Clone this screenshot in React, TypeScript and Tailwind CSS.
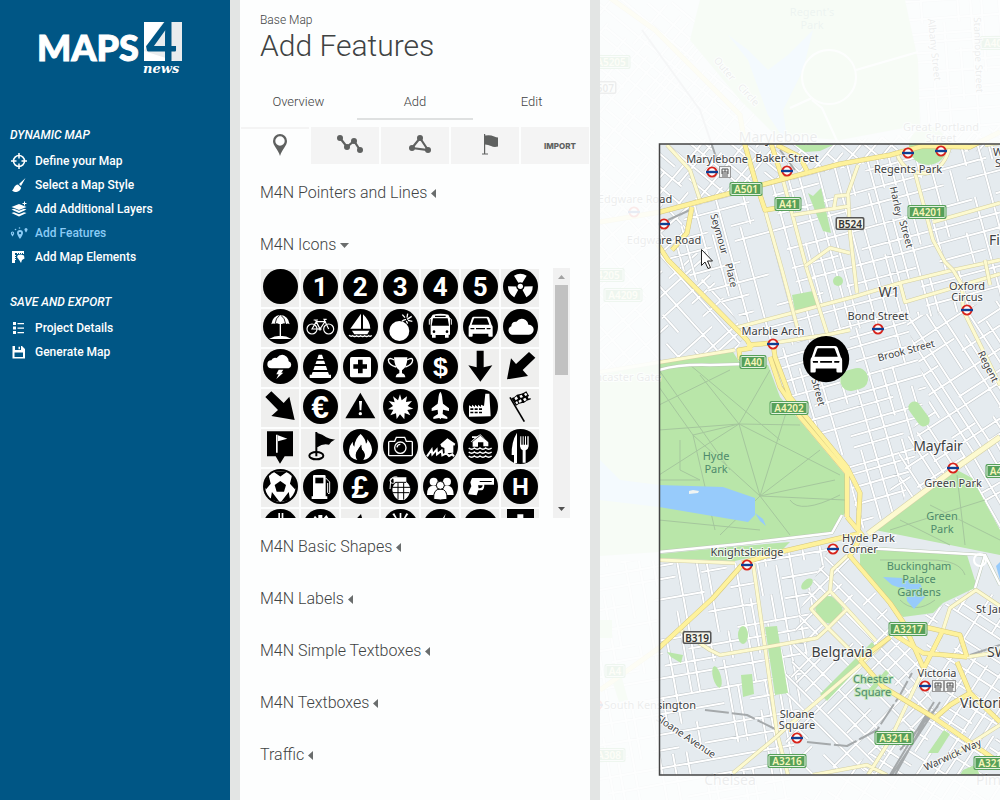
import { useState, type ReactNode } from "react";

type IconDef = { name: string; bare?: boolean; art?: ReactNode };
type Point = [number, number];

/* ---------- sidebar ---------- */

function Logo() {
  return (
    <svg width="146" height="54" viewBox="0 0 146 54" role="img" aria-label="Maps4News">
      <text
        x="0"
        y="39"
        fontSize="36"
        fontWeight="900"
        fill="#fff"
        stroke="#fff"
        strokeWidth="1"
        fontFamily="Lato, sans-serif"
      >
        MAPS
      </text>
      <rect x="107" y="0" width="38" height="39" fill="#fff" />
      <path d="M126 0h19v39h-7L107 29z" fill="#e9ecee" />
      <text x="109" y="39" fontSize="54" fontWeight="900" fill="#005685" fontFamily="Lato, sans-serif">
        4
      </text>
      <text
        x="106"
        y="51"
        fontSize="13"
        fontWeight="700"
        fontStyle="italic"
        fill="#fff"
        fontFamily="'DejaVu Serif', serif"
      >
        news
      </text>
    </svg>
  );
}

const navIcons: Record<string, ReactNode> = {
  define: (
    <g fill="none" stroke="currentColor" strokeWidth="1.5">
      <circle cx="9" cy="8" r="5.5" />
      <path d="M9 0v5.500M9 10.500V16M1 8h5.500M11.500 8H17" />
    </g>
  ),
  style: (
    <path
      fill="currentColor"
      d="M15.500 1l-6.500 6 2 2zM8 7.500l3 3c0 2.500-2.500 4.500-6 4.500-1 0-2-1-3-1.500C4 12.500 4 8 8 7.500z"
    />
  ),
  layers: (
    <g fill="currentColor">
      <path d="M1.500 6L9 3l7.500 3L9 9z" />
      <path d="M1.500 8.500L4 7.800l5 2 5-2 2.500.7L9 12z" />
      <path d="M1.500 12l2.500-.8 5 2 5-2 2.500.8L9 15.500z" />
      <path d="M14 .5h1V2h1.500v1H15v1.500h-1V3h-1.500V2H14z" />
    </g>
  ),
  features: (
    <g fill="currentColor">
      <path fillRule="evenodd" d="M10 5a3 3 0 0 1 3 3c0 2-3 6-3 6S7 10 7 8a3 3 0 0 1 3-3zm0 1.900a1.200 1.200 0 1 0 0 2.400 1.200 1.200 0 0 0 0-2.400z" />
      <path fillRule="evenodd" d="M2.500 6.500a1.700 1.700 0 0 1 1.700 1.700c0 1.100-1.700 3.300-1.700 3.300S.8 9.300.8 8.200a1.700 1.700 0 0 1 1.700-1.700zm0 1.100a.6.6 0 1 0 0 1.200.6.600 0 0 0 0-1.200z" />
      <path d="M16 3a1.500 1.500 0 0 1 1.500 1.500C17.500 5.500 16 7.500 16 7.500s-1.500-2-1.500-3A1.500 1.500 0 0 1 16 3z" />
      <circle cx="5.500" cy="4.500" r=".8" />
      <circle cx="9.500" cy="3" r=".8" />
    </g>
  ),
  elements: (
    <g fill="currentColor">
      <path d="M2 2h12v3h-1V4h-1v1h-1V4h-1v1H9V4H8v1H7V4H5v2h1v1H5v1h1v1H5v1h1v1H5v3H2z" />
      <path d="M8 6l3-.5 3 1 .5 3L12 11l-1 3-1.500-2.500L8 9.500 7 8z" />
    </g>
  ),
  details: (
    <path fill="currentColor" d="M3 2h3v3H3zM3 6.500h3v3H3zM3 11h3v3H3zM7.500 3H14v1.200H7.500zM7.500 7.500H14v1.200H7.500zM7.500 12H14v1.200H7.500z" />
  ),
  save: (
    <path fill="currentColor" fillRule="evenodd" d="M2.500 2H12l3 3v9.500H2.500zM5 2v4h6V2zM8.500 2.700h1.500v2.600H8.500zM4.500 8.500V13H13V8.500z" />
  ),
};

const menu = [
  {
    title: "Dynamic Map",
    items: [
      { icon: "define", label: "Define your Map" },
      { icon: "style", label: "Select a Map Style" },
      { icon: "layers", label: "Add Additional Layers" },
      { icon: "features", label: "Add Features", active: true },
      { icon: "elements", label: "Add Map Elements" },
    ],
  },
  {
    title: "Save and Export",
    items: [
      { icon: "details", label: "Project Details" },
      { icon: "save", label: "Generate Map" },
    ],
  },
];

function Sidebar() {
  return (
    <aside className="w-[230px] shrink-0 bg-[#005685] text-white">
      <div className="flex justify-end pt-[22px] pr-[47px]">
        <Logo />
      </div>
      <nav className="mt-[50px] flex flex-col gap-6 px-[10px]">
        {menu.map((group) => (
          <section key={group.title}>
            <h2 className="mb-[5px] text-[12px] leading-[18px] font-medium uppercase italic">{group.title}</h2>
            <ul>
              {group.items.map((item) => (
                <li key={item.label}>
                  <a
                    href="#"
                    className={
                      "flex h-6 items-center gap-[5px] text-[12px] font-medium " +
                      ("active" in item ? "text-[#8bcbf5]" : "text-white")
                    }
                  >
                    <svg width="20" height="16" viewBox="0 0 20 16" aria-hidden="true">
                      {navIcons[item.icon]}
                    </svg>
                    {item.label}
                  </a>
                </li>
              ))}
            </ul>
          </section>
        ))}
      </nav>
    </aside>
  );
}

/* ---------- icon library ---------- */

function Glyph({ c, size = 72, narrow }: { c: string; size?: number; narrow?: boolean }) {
  return (
    <text
      x="52"
      y={52 + size * 0.36}
      fontSize={size}
      fontWeight="700"
      textAnchor="middle"
      fill="#fff"
      fontFamily={narrow ? "Roboto, sans-serif" : "'Liberation Sans', sans-serif"}
    >
      {c}
    </text>
  );
}

const carArt = (
  <>
    <path d="M32 23h41q4 0 6 4l7 21q3 3 3 7v26q0 2-2 2h-8q-3 0-3-3v-6H29v6q0 3-3 3h-7q-2 0-2-2V55q0-4 3-7l7-21q2-4 5-4z" fill="#fff" />
    <path d="M35 28h35q2 0 3 3l6 16H26l6-16q1-3 3-3zM22 57h12v4H23zM83 57H71v4h11zM39 57h27v4H39z" fill="#000" />
  </>
);

const icons: IconDef[] = [
  { name: "Circle" },
  { name: "One", art: <Glyph c="1" size={78} narrow /> },
  { name: "Two", art: <Glyph c="2" size={78} narrow /> },
  { name: "Three", art: <Glyph c="3" size={78} narrow /> },
  { name: "Four", art: <Glyph c="4" size={78} narrow /> },
  { name: "Five", art: <Glyph c="5" size={78} narrow /> },
  {
    name: "Radiation",
    art: (
      <g transform="translate(52 52)" fill="#fff">
        <circle r="8" />
        {[0, 120, 240].map((a) => (
          <path key={a} transform={`rotate(${a})`} d="M-19-32A37 37 0 0 1 19-32L6-11A13 13 0 0 0-6-11z" />
        ))}
      </g>
    ),
  },
  {
    name: "Beach",
    art: (
      <>
        <path d="M25 46Q28 20 52 18q24 2 28 28-6-5-10-1-7-5-13 0h-9q-7-5-13 0-5-4-10 1zM50 45h4v36h-4zM18 90q16-10 34-10t34 10z" fill="#fff" />
        <path d="M36 45q2-18 14-26M68 45q-2-18-14-26" stroke="#000" strokeWidth="2.500" fill="none" />
      </>
    ),
  },
  {
    name: "Bicycle",
    art: (
      <g fill="none" stroke="#fff" strokeWidth="3.500">
        <circle cx="27" cy="60" r="15" />
        <circle cx="77" cy="60" r="15" />
        <path d="M27 60l13-22h26L51 60zM51 60L38 34M32 33h13M77 60L63 31h8M40 40l11 20" />
        <circle cx="51" cy="60" r="3" />
      </g>
    ),
  },
  {
    name: "Boat",
    art: (
      <>
        <path d="M54 14v45H22zM60 16q20 18 22 43H60zM27 65h52l-6 11H34z" fill="#fff" />
        <path d="M18 79q6 5 11 1 6 5 12 0 6 5 12 0 6 5 12 0 6 5 12 0 5 4 9-1" stroke="#fff" strokeWidth="4" fill="none" />
      </>
    ),
  },
  {
    name: "Bomb",
    art: (
      <>
        <circle cx="49" cy="66" r="30" fill="#fff" />
        <path d="M57 37q6-6 12-5M72 31l14-9M72 26l2-12M66 26l-8-9M75 34l13 3M70 36l4 8" stroke="#fff" strokeWidth="4" fill="none" />
      </>
    ),
  },
  {
    name: "Bus",
    art: (
      <>
        <path d="M29 17q24-5 47 0l5 10v50h-4v9H66v-8H38v8H27v-9h-4V27z" fill="#fff" />
        <path d="M30 28h44l4 22H26zM36 20h32v4H36z" fill="#000" />
        <path d="M28 53h48" stroke="#fff" strokeWidth="3" />
        <circle cx="33" cy="68" r="4" fill="#000" />
        <circle cx="72" cy="68" r="4" fill="#000" />
        <path d="M24 28l-5 3v16M80 28l5 3v16" stroke="#fff" strokeWidth="3" fill="none" />
      </>
    ),
  },
  { name: "Car", art: carArt },
  {
    name: "Cloud",
    art: <path d="M28 77a13 13 0 0 1-3-25q0-15 15-14 12-15 28-5 8 6 8 14a15 15 0 0 1 2 30z" fill="#fff" />,
  },
  {
    name: "Storm",
    art: <path d="M25 58a12 12 0 0 1 0-24q4-10 16-7 14-17 30-4 6 6 6 14a11 11 0 0 1 0 21zM47 62h14l-6 9h6L40 90l7-14h-7z" fill="#fff" />,
  },
  {
    name: "Traffic cone",
    art: (
      <>
        <path d="M47 17h10l21 60h6v10H20V77h6z" fill="#fff" />
        <path d="M34 30h36v5H34zM30 45h44v6H30zM26 63h54v6H26z" fill="#000" />
      </>
    ),
  },
  {
    name: "First aid",
    art: (
      <>
        <rect x="21" y="24" width="63" height="61" rx="5" fill="#fff" />
        <path d="M45 32h14v14h13v13H59v14H45V59H31V46h14z" />
      </>
    ),
  },
  {
    name: "Trophy",
    art: (
      <>
        <path d="M33 25h40q0 30-16 39v9q9 2 10 12H38q1-10 11-12v-9Q34 55 33 25z" fill="#fff" />
        <path d="M34 33q-16-9-18 0 1 15 23 21M72 33q16-9 17 0-1 15-22 21" stroke="#fff" strokeWidth="4" fill="none" />
      </>
    ),
  },
  { name: "Dollar", art: <Glyph c="$" size={80} /> },
  { name: "Arrow down", bare: true, art: <path d="M41 5h21v50l26-6-36 49-36-49 25 6z" /> },
  { name: "Arrow down left", bare: true, art: <path d="M78 9l19 17-38 37 16 18-63 10 12-63 15 17z" /> },
  { name: "Arrow down right", bare: true, art: <path d="M25 7L7 24l38 39-20 18 70 12-16-70-17 19z" /> },
  { name: "Euro", art: <Glyph c="€" size={94} /> },
  {
    name: "Warning",
    bare: true,
    art: (
      <>
        <path d="M52 11l45 77H7z" />
        <path d="M48 36h9l-2 28h-5z" fill="#fff" />
        <circle cx="52" cy="74" r="5" fill="#fff" />
      </>
    ),
  },
  {
    name: "Explosion",
    art: <path d="M51 16l5 18 16-12-3 17 18-3-13 15 17 8-18 4 9 16-17-7-1 19-13-15-10 14-2-17-17 6 9-17-16-1 15-10-13-15 18 4-5-18 15 12z" fill="#fff" />,
  },
  {
    name: "Plane",
    art: <path d="M52 8q5 6 6 22l2 14 18 14v8l-18-4-1 13 14 9v6l-18-3-3 4-3-4-18 3v-6l14-9-1-13-18 4v-8l18-14 2-14q1-16 6-22z" fill="#fff" />,
  },
  {
    name: "Factory",
    art: (
      <>
        <path d="M18 83V49l9 5v-7l9 7v-7l9 7v-7l9 7v-7l9 4 4-37h12l4 68z" fill="#fff" />
        <path d="M22 58h9v5h-9zM35 58h9v5h-9zM48 58h9v5h-9zM22 68h9v5h-9zM35 68h9v5h-9zM48 68h9v5h-9z" />
      </>
    ),
  },
  {
    name: "Finish flag",
    bare: true,
    art: (
      <>
        <path d="M21 25l43 73" stroke="#000" strokeWidth="5" />
        <path d="M25 28q10-3 17-11 12 0 28-10l14 24q-14 4-22 11-12-2-23 8z" />
        <path d="M34 27l7-5 4 7-7 5zM49 20l7-3 4 7-7 3zM63 15l6-4 4 7-6 3zM46 36l7-5 4 6-7 5zM60 30l7-4 4 7-7 4zM74 23l6-3 3 6-6 3zM37 40l5-4 4 7-5 3z" fill="#fff" />
      </>
    ),
  },
  {
    name: "Golf pin",
    bare: true,
    art: (
      <>
        <path d="M12 7h78v75H65L51 104 38 82H12z" />
        <path d="M39 17h5v54h-5zM45 19l28 10-28 8z" fill="#fff" />
      </>
    ),
  },
  {
    name: "Golf hole",
    bare: true,
    art: (
      <>
        <path d="M37 9h6v73h-6zM43 12q16 4 27 13 12 7 27 6Q84 38 78 47q-18-5-35 8z" />
        <ellipse cx="40" cy="80" rx="21" ry="11" fill="none" stroke="#000" strokeWidth="6" />
      </>
    ),
  },
  {
    name: "Fire",
    art: (
      <>
        <path d="M53 15q15 15 16 29 5-5 4-13 18 22 13 41-5 18-25 21 10-16-4-31-3-7-1-15-13 13-15 25-5 12 2 21Q16 88 18 64q1-14 11-26 0 11 5 15 2-25 19-38z" fill="#fff" />
        <path d="M53 46q-2 9 4 16 10 8 8 20-2 9-12 11-16-1-15-15 0-10 9-18 5-6 6-14z" />
      </>
    ),
  },
  {
    name: "Camera",
    art: (
      <g fill="none" stroke="#fff" strokeWidth="4">
        <path d="M20 37h15l5-12h25l5 12h15q3 0 3 3v37q0 3-3 3H20q-3 0-3-3V40q0-3 3-3z" />
        <circle cx="52" cy="56" r="17" />
        <path d="M42 55q1-9 10-9" />
      </g>
    ),
  },
  {
    name: "Landslide",
    art: (
      <>
        <path d="M52 46l21-18 24 16-3 6-3-1v22l-26 2-1-16-9-4z" fill="#fff" />
        <path d="M12 82l14-20 2 14 13-14 1 14 14-11 2 14 12-6 8 8 10-5 5 6" stroke="#fff" strokeWidth="6" fill="none" />
      </>
    ),
  },
  {
    name: "Flood",
    art: (
      <>
        <path d="M27 22h15l10-6 24 23v13H61V40H45v13H29V40l-6-1 12-12h-8z" fill="#fff" />
        <path d="M23 42l29-23 29 23" stroke="#000" strokeWidth="2" fill="none" />
        {[57, 69, 81].map((y) => (
          <path key={y} d={`M17 ${y}q9 7 17 0 9 7 17 0 9 7 17 0 9 7 18 0`} stroke="#fff" strokeWidth="4.500" fill="none" />
        ))}
      </>
    ),
  },
  {
    name: "Restaurant",
    art: <path d="M42 11v91h-9V78h-7Q25 38 42 11zM52 22h3v25h4V22h3v25h4V22h3v25h4V22h4v30q-1 9-9 12v37h-9V64q-7-3-8-12z" fill="#fff" />,
  },
  {
    name: "Football",
    art: (
      <>
        <circle cx="52" cy="52" r="46" fill="#fff" />
        <path d="M52 36l17 12-6 20H41l-6-20z" />
        <path d="M36 9h32L52 20zM5 44l11-20 5 20-12 14zM99 44L88 24l-5 20 13 14zM25 91l3-17 17 22zM79 91l-3-17-17 22z" stroke="#000" strokeWidth="4" />
      </>
    ),
  },
  {
    name: "Fuel",
    art: (
      <>
        <path d="M33 18h31q4 0 4 4v60h5v8H26v-8h4V22q0-4 3-4z" fill="#fff" />
        <path d="M37 26h24v17H37z" />
        <path d="M68 27l12 12v32q-1 7-6 0V42" stroke="#fff" strokeWidth="3" fill="none" />
      </>
    ),
  },
  { name: "Pound", art: <Glyph c="£" size={94} /> },
  {
    name: "Grenade",
    art: (
      <>
        <path d="M31 25h39v14q12 8 12 25-3 20-18 29H46Q31 84 28 64q0-16 13-25h-9z" fill="#fff" />
        <path d="M28 55h54M29 71h50M45 42v50M62 42v50M35 40h34" stroke="#000" strokeWidth="3" />
        <path d="M43 24q-15-3-20 10l-2 26" stroke="#fff" strokeWidth="3" fill="none" />
        <circle cx="29" cy="35" r="8" stroke="#fff" strokeWidth="3" fill="none" />
      </>
    ),
  },
  {
    name: "People",
    art: (
      <>
        <g fill="#fff">
          <circle cx="32" cy="38" r="12" />
          <circle cx="72" cy="38" r="12" />
          <path d="M12 78q-1-28 20-28t20 28zM53 78q-1-28 19-28t20 28z" />
        </g>
        <g fill="#fff" stroke="#000" strokeWidth="3">
          <path d="M32 91q-2-31 20-31t20 31q-20 4-40 0z" />
          <circle cx="52" cy="49" r="12" />
        </g>
      </>
    ),
  },
  {
    name: "Pistol",
    art: (
      <>
        <path d="M27 27h66v20H64q0 16-9 17h-9l-5 15-26-3q2-9 10-24l-3-12z" fill="#fff" />
        <path d="M45 49h14q-1 10-12 9zM50 36h36v3H50z" />
      </>
    ),
  },
  { name: "Hospital", art: <Glyph c="H" size={70} /> },
  { name: "Road", art: <path d="M46 12h5v20h-5zM56 12h5v20h-5zM36 90l8-62h18l8 62z" fill="#fff" /> },
  { name: "House", art: <path d="M24 40l12-20 10 12V18h12v14l12-14 14 20v40H24z" fill="#fff" /> },
  { name: "Spark", bare: true, art: <path d="M54 15L34 36l4 40 24-30z" /> },
  { name: "Alarm", art: <path d="M50 12h5v16h-5zM28 15l6-2 8 15h-5zM76 15l-6-2-8 15h5zM25 45h54v40H25z" fill="#fff" /> },
  { name: "Lightning", art: <path d="M68 14L44 52h13L40 90l36-48H60z" fill="#fff" /> },
  { name: "Mountain", art: <path d="M52 30l34 50H18z" fill="#fff" /> },
  {
    name: "Cross",
    bare: true,
    art: (
      <>
        <path d="M12 0h81v100H12z" />
        <path d="M43 16h18v24h18v18H61v30H43V58H25V40h18z" fill="#fff" />
      </>
    ),
  },
];

function IconGrid() {
  const [picked, setPicked] = useState("Car");
  return (
    <div className="flex h-[250px] justify-between pr-5">
      <div className="grid grid-cols-7 content-start gap-[2px] overflow-hidden pt-px pl-px">
        {icons.map((icon) => (
          <button
            key={icon.name}
            type="button"
            aria-label={icon.name}
            aria-pressed={picked === icon.name}
            onClick={() => setPicked(icon.name)}
            className="h-[38px] w-[38px] cursor-pointer bg-[#efefee] pl-[2px]"
          >
            <svg width="35" height="35" viewBox="0 0 105 105" className="mb-[3px] block">
              {!icon.bare && <circle cx="52.500" cy="52.500" r="52.500" />}
              {icon.art}
            </svg>
          </button>
        ))}
      </div>
      <div className="flex w-[17px] flex-col items-center justify-between bg-[#f1f1f1]" aria-hidden="true">
        <div className="flex w-full flex-col items-center">
          <svg width="17" height="17" viewBox="0 0 17 17">
            <path d="M5 11h7L8.500 7z" fill="#a3a3a3" />
          </svg>
          <div className="h-[90px] w-[13px] bg-[#c1c1c1]" />
        </div>
        <svg width="17" height="17" viewBox="0 0 17 17">
          <path d="M5 6h7l-3.500 4z" fill="#505050" />
        </svg>
      </div>
    </div>
  );
}

/* ---------- feature panel ---------- */

const tools: { name: string; art: ReactNode }[] = [
  {
    name: "Pointer",
    art: (
      <path
        fillRule="evenodd"
        d="M15 2a7 7 0 0 1 7 7c0 5-5 8-7 15-2-7-7-10-7-15a7 7 0 0 1 7-7zm0 2.300a4.700 4.700 0 1 0 0 9.400 4.700 4.700 0 0 0 0-9.400z"
      />
    ),
  },
  {
    name: "Line",
    art: (
      <>
        <path d="M5 6l7 9 7-6 6 9" fill="none" stroke="#5f6160" strokeWidth="2.200" />
        <circle cx="5" cy="6" r="3" />
        <circle cx="12" cy="15" r="3" />
        <circle cx="19" cy="9" r="3" />
        <circle cx="25" cy="18" r="3" />
      </>
    ),
  },
  {
    name: "Area",
    art: (
      <>
        <path d="M15 6l8 12-16-2z" fill="none" stroke="#5f6160" strokeWidth="2.200" />
        <circle cx="15" cy="6" r="3" />
        <circle cx="23" cy="18" r="3" />
        <circle cx="7" cy="16" r="3" />
      </>
    ),
  },
  {
    name: "Flag",
    art: <path d="M9 2h1.200v1.500q5-1 9 1 2 1 3.800 1v9q-4 1-7-.5-3-1.500-5.800-1.500v9H13v1H7v-1h2z" />,
  },
];

const sections = [
  "M4N Pointers and Lines",
  "M4N Icons",
  "M4N Basic Shapes",
  "M4N Labels",
  "M4N Simple Textboxes",
  "M4N Textboxes",
  "Traffic",
];

function FeaturePanel() {
  const [open, setOpen] = useState("M4N Icons");
  return (
    <section className="w-[370px] shrink-0 border-x-[10px] border-[#e3e5e4] bg-[#fdfefe] text-[#3f4343]">
      <header className="px-5 pt-3">
        <p className="text-[12px] leading-4 font-light">Base Map</p>
        <h1 className="text-[30px] leading-9 font-light">Add Features</h1>
      </header>
      <div className="mt-5 grid grid-cols-3 text-[13px] font-light">
        {["Overview", "Add", "Edit"].map((tab) => (
          <button
            key={tab}
            type="button"
            className={
              "h-9 cursor-pointer border-b-2 pt-[2px] " + (tab === "Add" ? "border-[#dfe1e1]" : "border-transparent")
            }
          >
            {tab}
          </button>
        ))}
      </div>
      <div className="mt-[7px] flex gap-[2px] px-px">
        {tools.map((tool, i) => (
          <button
            key={tool.name}
            type="button"
            aria-label={tool.name}
            className={
              "flex h-[37px] flex-1 cursor-pointer justify-center border-t-2 border-[#f4f4f4] pt-[3px] pl-[10px] " +
              (i === 0 ? "" : "bg-[#f4f4f4]")
            }
          >
            <svg width="30" height="26" viewBox="0 0 30 26" fill="#5f6160" aria-hidden="true">
              {tool.art}
            </svg>
          </button>
        ))}
        <button
          type="button"
          className="h-[37px] flex-1 cursor-pointer bg-[#f4f4f4] pl-[10px] font-[Inter] text-[8px] font-extrabold text-[#5f6160]"
        >
          IMPORT
        </button>
      </div>
      <div className="flex flex-col pt-[17px] pl-5">
        {sections.map((name) => (
          <div key={name} className={open === name ? "pb-[17px]" : "pb-7"}>
            <button
              type="button"
              aria-expanded={open === name}
              onClick={() => setOpen(open === name ? "" : name)}
              className="flex h-6 cursor-pointer items-center gap-1 text-[16px] font-light"
            >
              {name}
              {open === name ? (
                <svg width="9" height="6" viewBox="0 0 9 6" fill="#6a6d6d" aria-hidden="true">
                  <path d="M0 1h9L4.500 6z" />
                </svg>
              ) : (
                <svg width="5" height="9" viewBox="0 0 5 9" fill="#6a6d6d" aria-hidden="true">
                  <path d="M5 0v9L0 4.500z" />
                </svg>
              )}
            </button>
            {open === name && (
              <div className="pt-[11px]">
                {name === "M4N Icons" ? <IconGrid /> : null}
              </div>
            )}
          </div>
        ))}
      </div>
    </section>
  );
}

/* ---------- map ---------- */

// Minor streets: a jittered, partly broken lattice rotated to the district's direction.
function lattice(cx: number, cy: number, angle: number, size: number, sx: number, sy: number, seed: number) {
  let s = seed;
  const rnd = () => {
    s = (s * 16807) % 2147483647;
    return s / 2147483647;
  };
  const rad = (angle * Math.PI) / 180;
  const at = (x: number, y: number) =>
    `${(cx + x * Math.cos(rad) - y * Math.sin(rad)).toFixed(1)} ${(cy + x * Math.sin(rad) + y * Math.cos(rad)).toFixed(1)}`;
  let d = "";
  for (let y = -size; y < size; y += sy * (0.6 + rnd() * 0.9)) {
    for (let x = -size; x < size; x += sx * 2) {
      if (rnd() > 0.16) d += `M${at(x, y)}L${at(x + sx * 2, y)}`;
    }
  }
  for (let x = -size; x < size; x += sx * (0.6 + rnd() * 0.9)) {
    for (let y = -size; y < size; y += sy * 2) {
      if (rnd() > 0.28) d += `M${at(x, y)}L${at(x, y + sy * 2)}`;
    }
  }
  return d;
}

const districts: { area: string; d: string }[] = [
  { area: "600,0 700,0 745,100 775,145 850,140 1000,125 1000,150 905,155 750,188 600,222", d: lattice(700, 90, 40, 330, 9, 13, 1181) },
  { area: "905,0 1000,0 1000,130 920,130", d: lattice(950, 60, -4, 90, 12, 13, 5501) },
  { area: "600,222 692,205 690,240 745,335 735,352 600,372", d: lattice(690, 290, 48, 120, 12, 16, 7907) },
  { area: "690,205 800,172 1000,135 1000,305 773,343 668,258", d: lattice(830, 240, -15, 260, 12, 16, 23311) },
  { area: "773,345 905,318 930,400 900,515 860,530 847,468 790,395", d: lattice(850, 420, -16, 160, 13, 12, 31337) },
  { area: "905,318 1000,300 1000,437 880,530 900,450 930,400", d: lattice(950, 380, -33, 170, 14, 14, 43051) },
  { area: "972,478 953,470 1000,437 1000,530", d: lattice(985, 490, 60, 60, 13, 12, 9001) },
  { area: "600,560 742,563 790,548 830,545 815,600 790,775 790,800 600,800", d: lattice(700, 680, -10, 240, 13, 14, 57193) },
  { area: "830,545 850,555 925,665 935,715 860,775 790,775 780,700 800,610", d: lattice(850, 660, 45, 150, 11, 17, 61001) },
  { area: "925,615 980,585 1000,600 1000,800 800,800 930,715", d: lattice(950, 710, 33, 170, 14, 14, 71999) },
];

const yellowRoads = [
  "M600 222L660 212L750 188L840 164L890 155L923 146L970 147L1000 132",
  "M692 207L687 233L672 250M655 240L668 260L747 340L752 348",
  "M606 -5L655 30L740 115L745 145L755 180L765 210L784 207",
  "M770 140L777 162L783 180M777 145L800 157L807 171",
  "M752 348L739 350L740 358L750 367M747 345L773 343M770 357L780 387L800 417L847 473L847 517M773 343L775 357L790 397L847 467L860 493L858 530",
  "M847 517L862 535L850 556L890 603L903 622L923 667M742 563L780 552L840 538L862 533",
  "M600 690L659 648L713 598L742 565",
  "M895 635L923 653L967 657M925 627L960 635L967 657M943 630L923 670M957 662L970 693L950 705L935 718M970 693L1000 722M860 660L883 687L933 717L1000 763M860 660L890 637",
];

const creamRoads = [
  "M600 372L735 350M773 343L826 335L850 330",
  "M735 328L853 297L900 283L953 270L1000 260M900 283L905 302L1000 274",
  "M765 210L782 270L798 330M783 180L793 217L807 270L827 333",
  "M793 215L850 206M858 165L848 193L850 233L857 293M834 208L836 196L848 195M805 266L830 248L850 253",
  "M915 173L933 240L945 262L953 270L962 285L963 310L1000 385M933 222L1000 203M985 260L990 285",
  "M667 145L690 170L700 200M897 154Q905 175 928 173Q945 168 950 146",
  "M659 560L735 563M753 563L765 647L777 733L788 775",
  "M680 630L710 650L720 655L767 647L817 638L828 628M848 555L832 570L830 591L811 609L828 628L847 609L830 591M847 609L876 641M828 628L860 660",
  "M890 637L860 665L787 727L775 738L733 773M923 670L890 740L868 775M813 775L867 765L887 775",
  "M967 657L1000 652M943 630L950 608L976 590L1000 606M985 145L1000 143M945 760L1000 725",
];

const greens = [
  "600,375 659,363 733,352 740,363 768,365 780,397 847,477 845,513 830,533 790,538 659,552 600,556",
  "700,0 905,0 918,60 920,125 840,140 775,135 740,100 690,40",
  "875,530 957,470 972,478 1000,530 1000,555",
  "860,553 877,547 967,555 977,587 943,603 933,613 903,617 883,593 860,567",
  "792,295 813,291 817,305 795,311",
  "765,627 777,626 788,693 775,695",
  "741,675 752,674 754,694 743,697",
  "808,193 813,196 821,188 831,233 823,231",
  "872,642 877,648 827,701 820,694",
  "928,753 944,730 950,734 938,753",
  "795,145 833,145 820,151 805,152",
  "659,554 730,547 790,542 782,550 735,561 659,558",
  "963,770 975,765 980,775 960,775",
];

const rails = [
  "M705 710L747 715L777 730M807 742L847 746L877 730L900 695L912 673",
  "M940 702L892 775M934 702L890 775M928 715L895 775M938 706L900 750M642 30L700 110L717 160M780 150L795 170M668 220L690 210M970 655L1000 645",
];

const parkPaths =
  "M693 435L739 424L840 475M693 435L659 387M693 435L715 530M739 424L760 496L835 480M739 424L700 375M739 424L770 370M739 424L800 425M659 430L739 424M739 424L659 475M693 435L760 496L820 450M760 496L720 535M760 496L790 535M760 496L845 500M760 496L790 400M659 405L730 370M659 370L730 470M680 440V470L700 480H659M790 500Q800 515 840 495M659 520L760 530M690 365L780 440M890 530L985 500M900 520L950 545M957 475L965 545M930 505L1000 540M880 560Q900 560 930 560T965 575M900 600Q915 615 935 600";

const stations: Point[] = [
  [712, 172], [787, 171], [908, 153], [941, 151], [664, 224], [634, 212], [773, 344], [878, 329],
  [967, 310], [953, 468], [747, 565], [833, 549], [925, 686], [797, 738], [597, 705],
];

type Shield = { x: number; y: number; t: string; b?: boolean };
const shields: Shield[] = [
  { x: 746, y: 189, t: "A501" },
  { x: 788, y: 204, t: "A41" },
  { x: 927, y: 212, t: "A4201" },
  { x: 850, y: 224, t: "B524", b: true },
  { x: 753, y: 362, t: "A40" },
  { x: 789, y: 408, t: "A4202" },
  { x: 996, y: 471, t: "A4" },
  { x: 908, y: 629, t: "A3217" },
  { x: 697, y: 638, t: "B319", b: true },
  { x: 894, y: 738, t: "A3214" },
  { x: 787, y: 761, t: "A3216" },
  { x: 993, y: 763, t: "A3215" },
  { x: 611, y: 62, t: "A5205" },
  { x: 602, y: 88, t: "B507", b: true },
  { x: 605, y: 275, t: "A4205" },
  { x: 623, y: 295, t: "A4209" },
  { x: 615, y: 671, t: "A4" },
  { x: 609, y: 755, t: "A308" },
  { x: 996, y: 43, t: "A400" },
];

type Label = { x: number; y: number; t: string; s?: number; park?: boolean; r?: number; start?: boolean };
const labels: Label[] = [
  { x: 717, y: 163, t: "Marylebone" },
  { x: 787, y: 162, t: "Baker Street" },
  { x: 908, y: 173, t: "Regents Park" },
  { x: 993, y: 156, t: "Warren", start: true },
  { x: 995, y: 167, t: "Street", start: true },
  { x: 635, y: 203, t: "Edgware Road" },
  { x: 664, y: 244, t: "Edgware Road" },
  { x: 773, y: 335, t: "Marble Arch" },
  { x: 878, y: 320, t: "Bond Street" },
  { x: 967, y: 290, t: "Oxford" },
  { x: 967, y: 301, t: "Circus" },
  { x: 953, y: 487, t: "Green Park" },
  { x: 747, y: 556, t: "Knightsbridge" },
  { x: 842, y: 542, t: "Hyde Park", start: true },
  { x: 842, y: 553, t: "Corner", start: true },
  { x: 937, y: 677, t: "Victoria" },
  { x: 797, y: 718, t: "Sloane" },
  { x: 797, y: 729, t: "Square" },
  { x: 976, y: 613, t: "St James's Park", start: true },
  { x: 650, y: 709, t: "South Kensington" },
  { x: 622, y: 381, t: "Lancaster Gate" },
  { x: 889, y: 297, t: "W1", s: 14 },
  { x: 989, y: 245, t: "Fitzrovia", s: 14, start: true },
  { x: 938, y: 451, t: "Mayfair", s: 14 },
  { x: 842, y: 657, t: "Belgravia", s: 14 },
  { x: 987, y: 657, t: "SW1", s: 14, start: true },
  { x: 960, y: 708, t: "Victoria", s: 14, start: true },
  { x: 778, y: 142, t: "Marylebone", s: 14 },
  { x: 730, y: 785, t: "Chelsea", s: 14 },
  { x: 976, y: 785, t: "Pimlico", s: 14, start: true },
  { x: 941, y: 131, t: "Great Portland" },
  { x: 941, y: 142, t: "Street" },
  { x: 716, y: 460, t: "Hyde", park: true },
  { x: 716, y: 473, t: "Park", park: true },
  { x: 942, y: 520, t: "Green", park: true },
  { x: 942, y: 533, t: "Park", park: true },
  { x: 919, y: 570, t: "Buckingham", park: true },
  { x: 919, y: 583, t: "Palace", park: true },
  { x: 919, y: 596, t: "Gardens", park: true },
  { x: 873, y: 683, t: "Chester", park: true },
  { x: 873, y: 696, t: "Square", park: true },
  { x: 812, y: 16, t: "Regent's", park: true },
  { x: 812, y: 29, t: "Park", park: true },
  { x: 716, y: 235, t: "Seymour", s: 10, r: 74 },
  { x: 728, y: 276, t: "Place", s: 10, r: 76 },
  { x: 893, y: 202, t: "Harley", s: 10, r: 78 },
  { x: 903, y: 235, t: "Street", s: 10, r: 74 },
  { x: 907, y: 354, t: "Brook Street", s: 10, r: -15 },
  { x: 815, y: 393, t: "Street", s: 10, r: 74 },
  { x: 985, y: 368, t: "Regent", s: 10, r: 63 },
  { x: 684, y: 739, t: "Sloane Avenue", s: 10, r: 34 },
  { x: 954, y: 758, t: "Warwick Way", s: 10, r: -25 },
  { x: 722, y: 71, t: "Outer", s: 10, r: 50 },
  { x: 746, y: 97, t: "Circle", s: 10, r: 48 },
  { x: 931, y: 50, t: "Albany Street", s: 10, r: 84 },
  { x: 975, y: 55, t: "Stanhope Street", s: 10, r: 88 },
];

function RoadShield({ x, y, t, b }: Shield) {
  const w = t.length * 6 + (b ? 5 : 9);
  return (
    <g transform={`translate(${x} ${y})`}>
      <rect x={-w / 2} y="-7" width={w} height={b ? 13 : 14} rx="2" fill={b ? "#555" : "#56a05a"} />
      <rect
        x={-w / 2 + 1.5}
        y="-5.500"
        width={w - 3}
        height={b ? 10 : 11}
        rx="1"
        fill={b ? "#f3f3e9" : "#56a05a"}
        stroke={b ? "none" : "#e6f3e2"}
      />
      <text y="3.500" textAnchor="middle" fontSize="10" fontWeight="600" fill={b ? "#333" : "#f7f5b8"}>
        {t}
      </text>
    </g>
  );
}

function MapView() {
  return (
    <main className="min-w-0 flex-1 overflow-hidden bg-[#fdfefe]">
      <svg
        className="h-full w-full"
        viewBox="600 0 400 800"
        preserveAspectRatio="xMinYMin slice"
        fontFamily="'Noto Sans', sans-serif"
        role="img"
        aria-label="Map of central London"
      >
        <defs>
          {districts.map((p, i) => (
            <clipPath key={i} id={`district-${i}`}>
              <polygon points={p.area} />
            </clipPath>
          ))}
        </defs>

        <rect x="600" width="400" height="800" fill="#e5ebef" />
        {districts.map((p, i) => (
          <g key={i} clipPath={`url(#district-${i})`} fill="none">
            <path d={p.d} stroke="#c2c8cb" strokeWidth="3" />
            <path d={p.d} stroke="#fff" strokeWidth="2" />
          </g>
        ))}

        <g fill="#b9e6a9">
          {greens.map((pts) => (
            <polygon key={pts} points={pts} />
          ))}
          <circle cx="928" cy="146" r="19" />
          <circle cx="838" cy="281" r="5" />
          <rect x="840" y="369" width="28" height="21" rx="10" transform="rotate(-14 854 379)" />
          <rect x="905" y="408" width="28" height="12" rx="6" transform="rotate(54 919 414)" />
          <rect x="818" y="598" width="23" height="23" rx="6" transform="rotate(45 829 609)" />
          <ellipse cx="743" cy="635" rx="5" ry="9" />
          <ellipse cx="717" cy="677" rx="4" ry="11" transform="rotate(-15 717 677)" />
          <ellipse cx="807" cy="584" rx="7" ry="4" transform="rotate(-42 807 584)" />
          <path d="M667 652l16 3-2 8-10-6zM868 690l18-20 3 3-16 19zM600 620h12v18h-12zM612 680l10-2 6 22-9 2z" />
        </g>
        <path d={parkPaths} fill="none" stroke="#a5c79d" />
        <g fill="#97cbfb">
          <path d="M600 460L620 480L659 485L723 487L755 498L755 515L748 522L659 507L600 500z" />
          <path d="M755 513l8 6 3 7-6-5z" />
          <path d="M883 577l20 1 17 5 6 13-12 13-7-8-1-11-14-5zM996 566l4-4v18z" />
          <path d="M728 35l20 15 20 20 20-15 25-25-10 40-20 40 5 35-20-30-20-55z" />
        </g>
        <path d="M689 491l4-1 6 1-1 2-9 1z" fill="#f0f4f2" />

        <g fill="none" strokeLinejoin="round">
          <circle cx="829" cy="77" r="27" stroke="#fff" strokeWidth="2" />
          <path d="M856 70l62-18M812 100l10 8 15 33M812 98l-22 10" stroke="#fff" strokeWidth="2" />
          <path d="M659 370Q680 364 710 365L745 364M659 552L740 544L832 533L842 515M865 548L985 555L975 588M985 555L1000 585" stroke="#bcc8b8" strokeWidth="3.500" />
          <path d="M659 370Q680 364 710 365L745 364M659 552L740 544L832 533L842 515M865 548L985 555L975 588M985 555L1000 585" stroke="#fff" strokeWidth="2.500" />
          <circle cx="980" cy="560" r="6" stroke="#fff" strokeWidth="2" />
          <path d={rails[0]} stroke="#a5a9ab" strokeWidth="2" strokeDasharray="24 3" />
          <path d={rails[1]} stroke="#a5a9ab" strokeWidth="2" />
          {creamRoads.map((d) => (
            <g key={d}>
              <path d={d} stroke="#d3cfa4" strokeWidth="4" />
              <path d={d} stroke="#fdfad0" strokeWidth="3" />
            </g>
          ))}
          <path d="M868 534L953 470L1000 437" stroke="#d3cfa4" strokeWidth="6" />
          <path d="M868 534L953 470L1000 437" stroke="#fdfad0" strokeWidth="5" />
          {yellowRoads.map((d) => (
            <path key={d} d={d} stroke="#d4c67c" strokeWidth="5" />
          ))}
          {yellowRoads.map((d) => (
            <path key={d} d={d} stroke="#fef29c" strokeWidth="4" />
          ))}
        </g>

        {stations.map(([x, y]) => (
          <g key={`${x}-${y}`} transform={`translate(${x} ${y})`}>
            <circle r="4.600" fill="#fff" stroke="#d8241c" strokeWidth="1.800" />
            <rect x="-6" y="-1.200" width="12" height="2.400" fill="#0f3f93" />
          </g>
        ))}
        {[[725, 172], [938, 686], [950, 686]].map(([x, y]) => (
          <g key={x} transform={`translate(${x} ${y})`} fill="none" stroke="#555">
            <rect x="-5.500" y="-5.500" width="11" height="11" fill="#f2f4f4" stroke="#999" />
            <path d="M-3-3h6v5h-6zM-3 0h6M0-3v3M-3 4h6" />
          </g>
        ))}
        {shields.map((s) => (
          <RoadShield key={`${s.t}-${s.x}`} {...s} />
        ))}
        {labels.map((l) => (
          <text
            key={`${l.t}-${l.x}-${l.y}`}
            transform={`translate(${l.x} ${l.y}) rotate(${l.r ?? 0})`}
            fontSize={l.s ?? 11}
            textAnchor={l.start ? "start" : "middle"}
            fill={l.park ? "#4f8a6c" : "#3d3f42"}
            stroke={l.park ? "#b9e6a9" : "#fff"}
            strokeOpacity="0.8"
            strokeWidth="2"
            paintOrder="stroke"
          >
            {l.t}
          </text>
        ))}

        {/* everything outside the export frame is faded */}
        <path
          fillRule="evenodd"
          fill="#fdfefe"
          fillOpacity="0.91"
          d="M600 0H1400V800H600zM659 144V775H1400V144z"
        />
        <path d="M1400 144H659.500V775H1400" fill="none" stroke="#444" strokeWidth="1.500" />

        <g transform="translate(803 336) scale(0.440)">
          <circle cx="52.500" cy="52.500" r="52.500" />
          {carArt}
        </g>
        <path d="M701.500 249.500v16l3.500-3.500 3 6.500 2.500-1-3-6.500h5z" fill="#fff" stroke="#222" />
      </svg>
    </main>
  );
}

export default function App() {
  return (
    <div className="flex h-screen overflow-hidden font-[Roboto,sans-serif]">
      <Sidebar />
      <FeaturePanel />
      <MapView />
    </div>
  );
}
